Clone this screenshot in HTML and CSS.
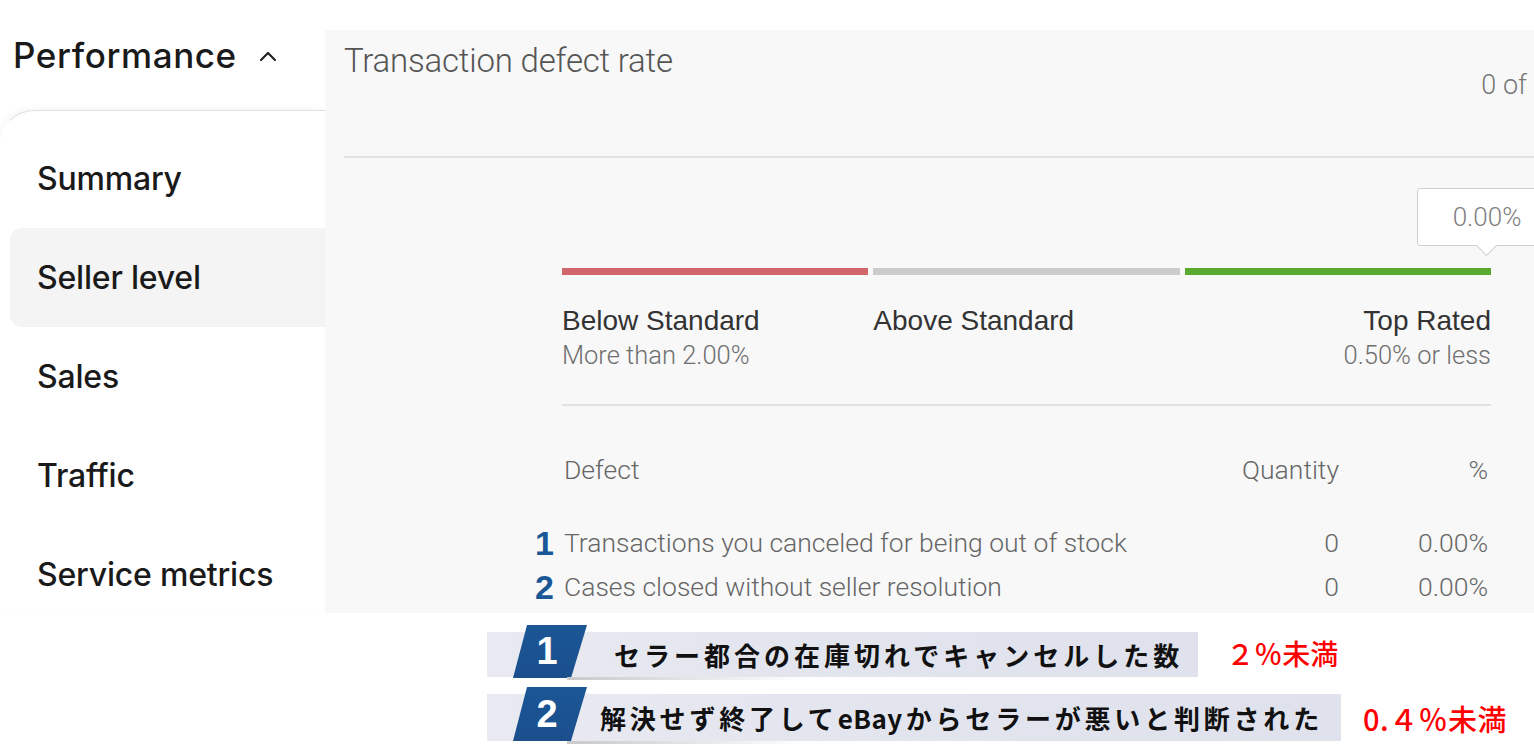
FILE: index.html
```html
<!DOCTYPE html>
<html lang="ja">
<head>
<meta charset="utf-8">
<title>Transaction defect rate</title>
<link rel="stylesheet" href="styles.css">
</head>
<body>
<div class="top">
  <aside class="sidebar">
    <div class="side-head">
      <span class="side-title">Performance</span>
      <svg class="chev" width="20" height="12" viewBox="0 0 20 12"><path d="M3 10 L10 3 L17 10" fill="none" stroke="#222" stroke-width="2.2" stroke-linecap="round" stroke-linejoin="round"/></svg>
    </div>
    <nav class="side-nav">
      <div class="nav-item">Summary</div>
      <div class="nav-item active">Seller level</div>
      <div class="nav-item">Sales</div>
      <div class="nav-item">Traffic</div>
      <div class="nav-item">Service metrics</div>
    </nav>
  </aside>
  <main class="panel">
    <header class="panel-head">
      <h1 class="panel-title">Transaction defect rate</h1>
      <span class="panel-count">0 of</span>
    </header>
    <section class="content">
      <div class="meter">
        <div class="tip">0.00%</div>
        <div class="bar bar-red"></div>
        <div class="bar bar-grey"></div>
        <div class="bar bar-green"></div>
        <div class="lvl">
          <div class="lvl-name">Below Standard</div>
          <div class="lvl-sub">More than 2.00%</div>
        </div>
        <div class="lvl">
          <div class="lvl-name">Above Standard</div>
        </div>
        <div class="lvl lvl-right">
          <div class="lvl-name">Top Rated</div>
          <div class="lvl-sub">0.50% or less</div>
        </div>
      </div>
      <div class="divider"></div>
      <div class="table">
        <div class="th">Defect</div>
        <div class="th num">Quantity</div>
        <div class="th num pct">%</div>
        <div class="td rowtxt"><span class="mark">1</span>Transactions you canceled for being out of stock</div>
        <div class="td num">0</div>
        <div class="td num pct">0.00%</div>
        <div class="td rowtxt"><span class="mark">2</span>Cases closed without seller resolution</div>
        <div class="td num">0</div>
        <div class="td num pct">0.00%</div>
      </div>
    </section>
  </main>
</div>
<div class="notes">
  <div class="note note1">
    <div class="band">
      <div class="tag">1</div>
      <div class="jp">セラー都合の在庫切れでキャンセルした数</div>
    </div>
    <div class="red">２％未満</div>
  </div>
  <div class="note note2">
    <div class="band">
      <div class="tag">2</div>
      <div class="jp">解決せず終了して<span class="latin">eBay</span>からセラーが悪いと判断された</div>
    </div>
    <div class="red">0.４％未満</div>
  </div>
</div>
</body>
</html>
```
FILE: styles.css
```css
* { box-sizing: border-box; }
html, body { margin: 0; padding: 0; }
body {
  width: 1534px;
  height: 752px;
  overflow: hidden;
  background: #fff;
  font-family: "Liberation Sans", Arial, sans-serif;
}
.top {
  display: flex;
  height: 613px;
}
.sidebar {
  width: 325px;
  flex: none;
  font-family: Inter, "Liberation Sans", sans-serif;
  color: #1a1a1a;
}
.side-head {
  height: 110px;
  display: flex;
  align-items: center;
  padding-left: 13px;
}
.side-title {
  font-size: 35px;
  font-weight: 500;
  letter-spacing: 0.6px;
}
.chev { margin-left: 21px; margin-top: 2px; }
.side-nav {
  border-top: 1px solid #e0e0e0;
  border-left: 1px solid transparent;
  border-top-left-radius: 34px;
  box-shadow: -2px -2px 6px rgba(0,0,0,0.035);
  padding-top: 18px;
  height: 503px;
}
.nav-item {
  height: 99px;
  display: flex;
  align-items: center;
  margin-left: 9px;
  padding-left: 27px;
  font-size: 32px;
  font-weight: 500;
  letter-spacing: -0.2px;
  border-radius: 12px 0 0 12px;
}
.nav-item.active { background: #f4f4f4; }

.panel {
  flex: 1;
  margin-top: 30px;
  background: #f8f8f8;
  overflow: hidden;
  font-family: Roboto, "Liberation Sans", sans-serif;
}
.panel-head {
  margin-left: 19px;
  height: 128px;
  border-bottom: 2px solid #e3e3e3;
  display: flex;
  justify-content: space-between;
  align-items: flex-start;
}
.panel-title {
  margin: 11px 0 0;
  font-size: 33px;
  line-height: 40px;
  font-weight: 300;
  color: #555;
  letter-spacing: -0.2px;
}
.panel-count {
  margin-top: 38px;
  margin-right: 7px;
  font-size: 27px;
  line-height: 34px;
  font-weight: 300;
  color: #777;
}
.content {
  margin-left: 237px;
  width: 929px;
  padding-top: 110px;
}
.meter {
  position: relative;
  display: grid;
  grid-template-columns: 1fr 1fr 1fr;
  column-gap: 5px;
}
.bar { height: 7px; }
.bar-red { background: #d1676c; }
.bar-grey { background: #cccccc; }
.bar-green { background: #5aaa2f; }
.lvl { padding-top: 29px; }
.lvl-right { text-align: right; }
.lvl-name {
  font-family: "Liberation Sans", Arial, sans-serif;
  font-size: 28px;
  line-height: 34px;
  color: #333;
}
.lvl-sub {
  font-size: 25.5px;
  line-height: 34px;
  font-weight: 300;
  color: #6f6f6f;
}
.tip {
  position: absolute;
  right: -66px;
  top: -80px;
  width: 140px;
  height: 58px;
  background: #fff;
  border: 1px solid #cfcfcf;
  border-radius: 3px;
  display: flex;
  align-items: center;
  justify-content: center;
  font-size: 26px;
  font-weight: 300;
  color: #808080;
}
.tip::after {
  content: "";
  position: absolute;
  left: 61px;
  bottom: -8px;
  width: 14px;
  height: 14px;
  background: #fff;
  border-right: 1px solid #cfcfcf;
  border-bottom: 1px solid #cfcfcf;
  transform: rotate(45deg);
}
.divider {
  margin-top: 32px;
  height: 2px;
  background: #e2e2e2;
}
.table {
  margin-top: 42px;
  display: grid;
  grid-template-columns: 1fr auto 152px;
  font-size: 26.5px;
  font-weight: 300;
  color: #666;
}
.th { line-height: 44px; margin-bottom: 29px; padding-left: 2px; }
.td { line-height: 44px; padding-left: 2px; }
.num { text-align: right; padding-left: 0; }
.pct { padding-right: 3px; }
.rowtxt { position: relative; }
.mark {
  position: absolute;
  left: -27px;
  top: 0;
  font-family: "Liberation Sans", Arial, sans-serif;
  font-weight: 700;
  font-size: 34px;
  color: #1a5796;
}

.notes {
  padding-top: 12px;
  padding-left: 487px;
  display: flex;
  flex-direction: column;
  gap: 10px;
}
.note {
  display: flex;
  align-items: flex-start;
}
.band {
  position: relative;
  margin-top: 7px;
  display: flex;
  align-items: flex-start;
  background: linear-gradient(90deg, #e9eaf1 0%, #e2e4ee 50%, #dfe1ec 100%);
  padding-right: 15px;
}
.note1 .band { height: 45px; }
.note2 .band { height: 47px; padding-right: 18px; }
.band::after {
  content: "";
  position: absolute;
  left: 80px;
  bottom: -3px;
  width: 240px;
  height: 3px;
  background: linear-gradient(90deg, #c9c9c9, rgba(220,220,220,0));
}
.tag {
  margin-left: 26px;
  margin-top: -7px;
  width: 74px;
  height: 53px;
  clip-path: polygon(14px 0, 74px 0, 58px 100%, 0 100%);
  background: linear-gradient(180deg, #1b5696 0%, #1a4f8c 100%);
  color: #fff;
  font-family: "Liberation Sans", Arial, sans-serif;
  font-weight: 700;
  font-size: 38px;
  display: flex;
  align-items: center;
  justify-content: center;
  padding-right: 6px;
  flex: none;
}
.note2 .tag { height: 54px; }
.jp {
  font-family: "Noto Sans CJK JP", sans-serif;
  font-weight: 700;
  font-size: 26px;
  line-height: 45px;
  letter-spacing: 4px;
  color: #111;
  margin-left: 27px;
  white-space: nowrap;
}
.jp .latin { letter-spacing: 0.5px; margin-right: 3px; }
.note2 .jp { margin-left: 13px; line-height: 47px; letter-spacing: 3.8px; }
.red {
  font-family: "Noto Sans CJK JP", sans-serif;
  font-weight: 500;
  font-size: 28px;
  line-height: 40px;
  color: #f00;
  margin-left: 28px;
  margin-top: 8px;
  white-space: nowrap;
}
.note2 .red { margin-left: 22px; margin-top: 11px; font-size: 29px; letter-spacing: 0.5px; }
```
